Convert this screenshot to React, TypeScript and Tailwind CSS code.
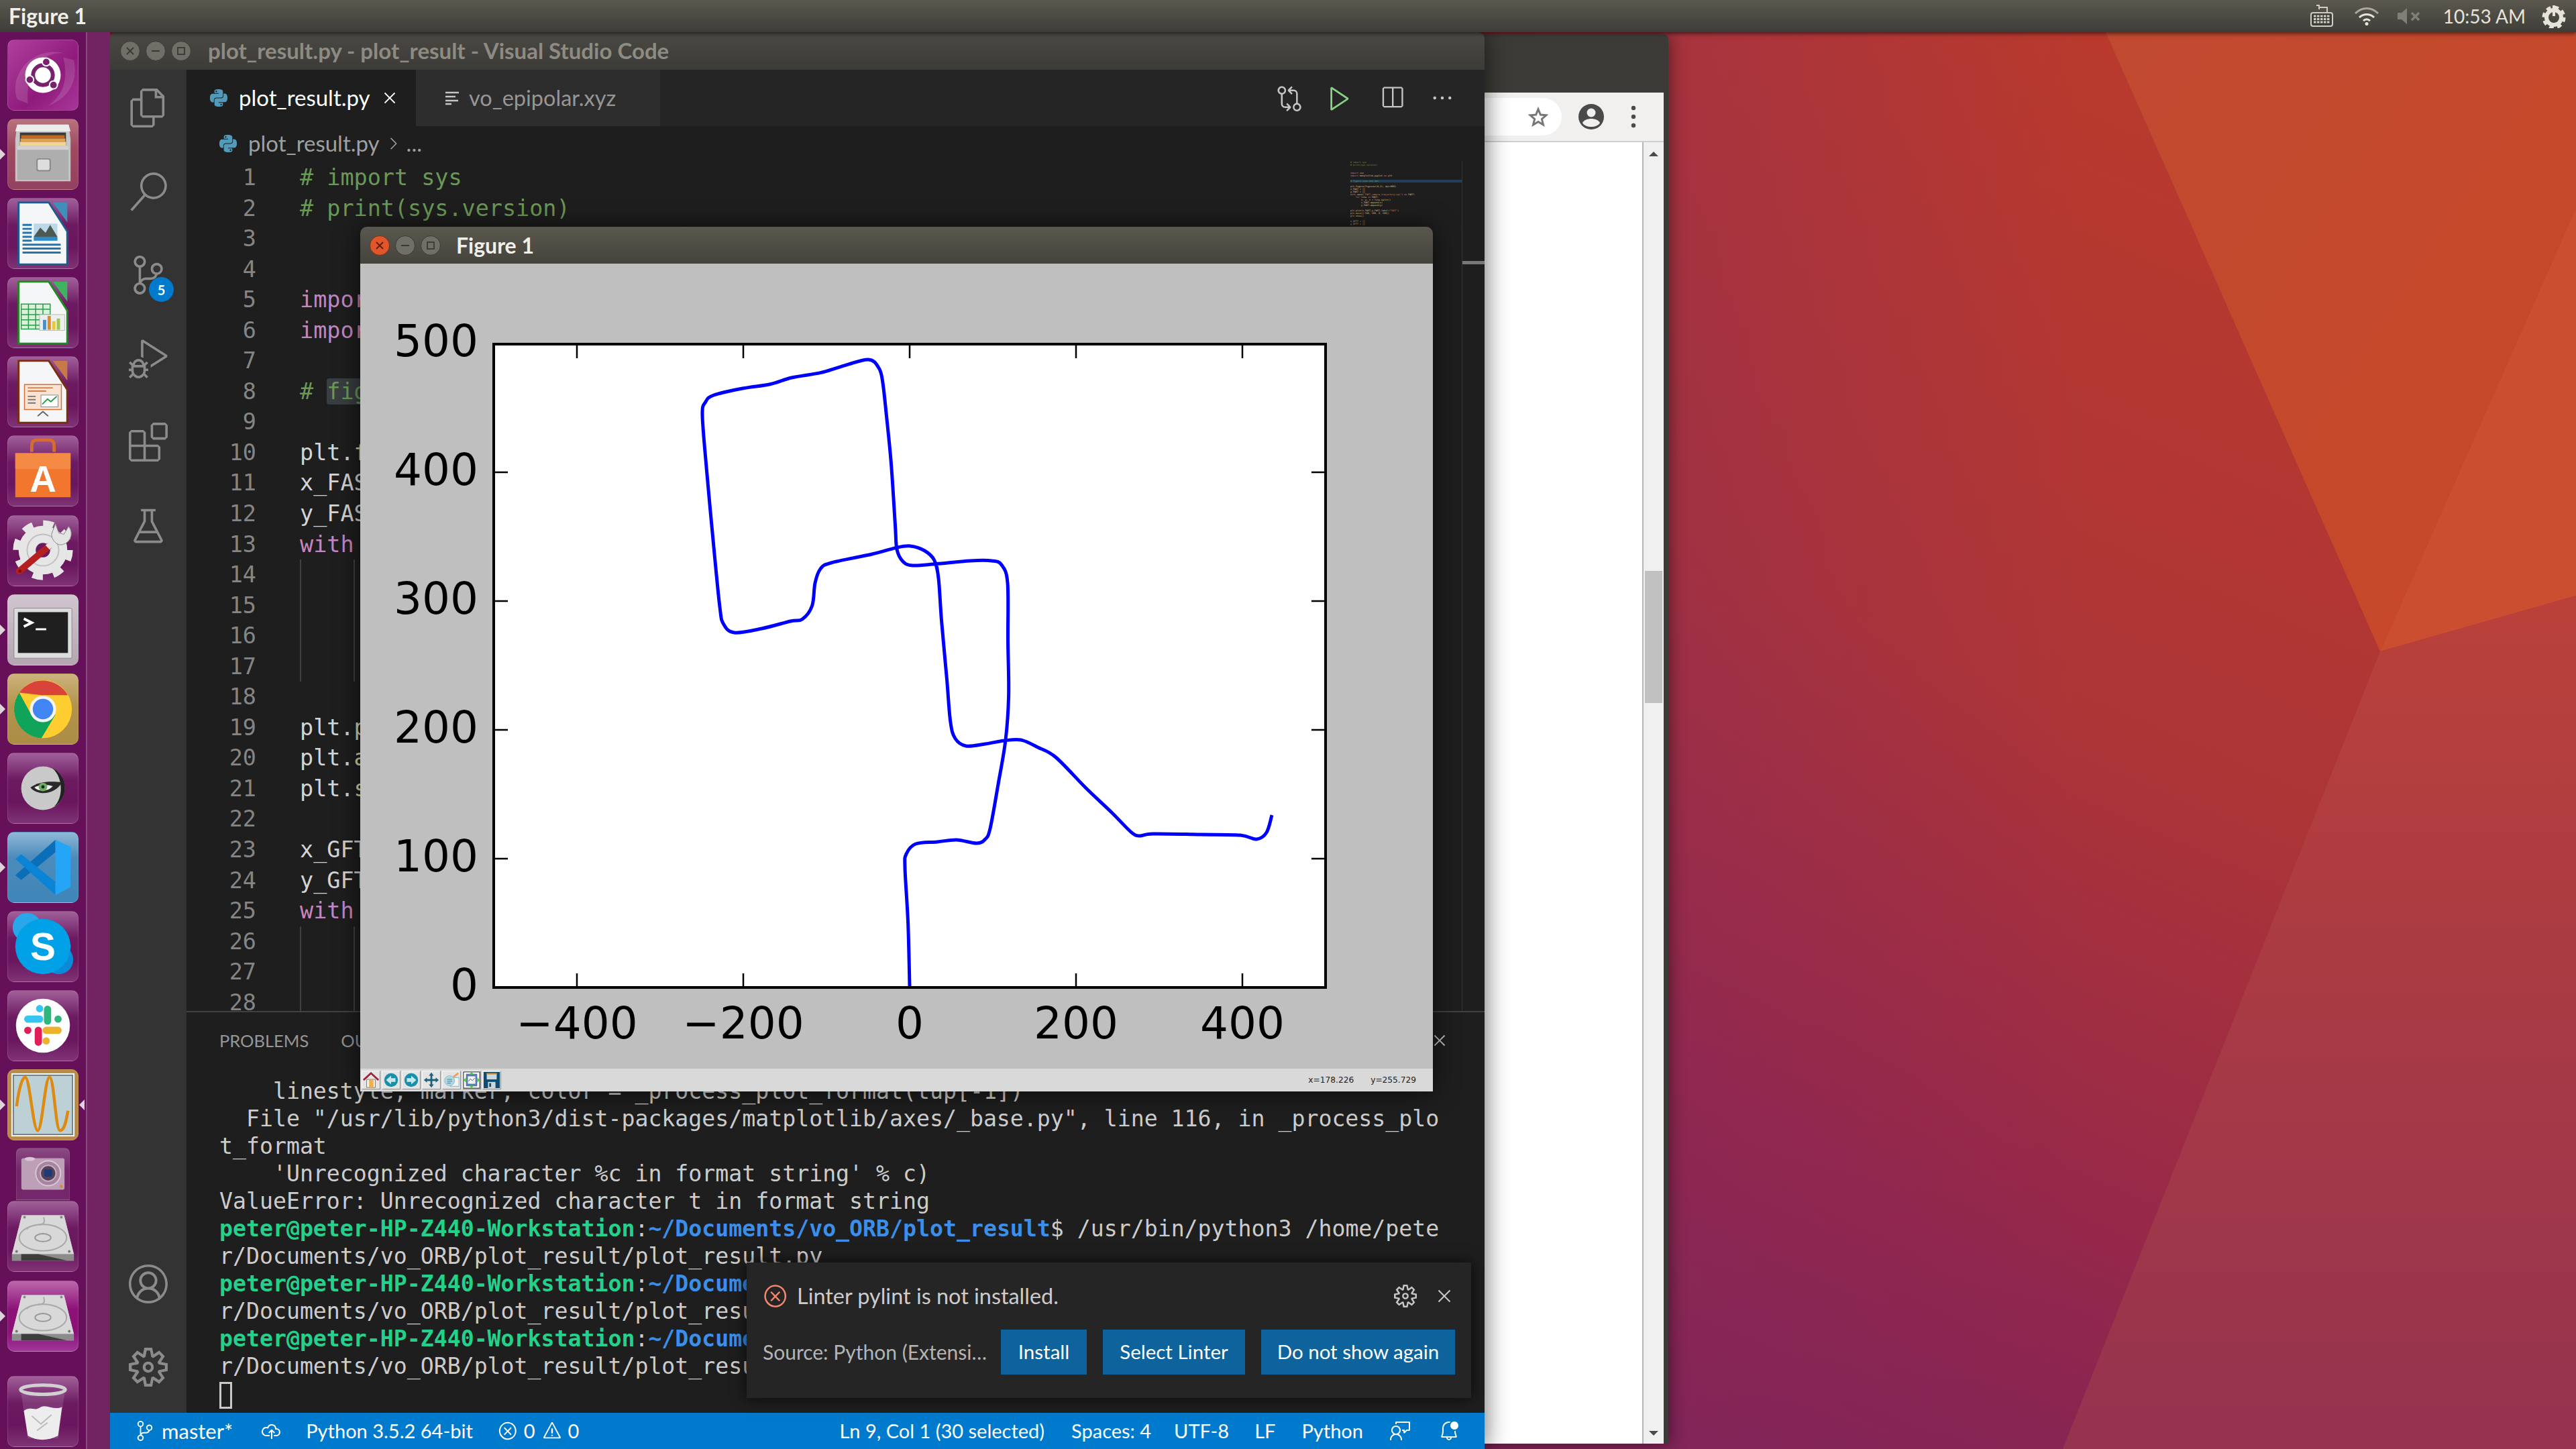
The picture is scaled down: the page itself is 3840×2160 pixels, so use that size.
import React from "react";
import { SiPython } from "react-icons/si";
import {
  VscFiles, VscSearch, VscSourceControl, VscDebugAlt, VscExtensions, VscBeaker, VscAccount, VscSettingsGear,
  VscGitCompare, VscPlay, VscSplitHorizontal, VscEllipsis, VscClose, VscCloudUpload, VscError, VscWarning,
  VscBellDot, VscFeedback, VscChevronRight,
} from "react-icons/vsc";

const curve: [number, number][] = [
  [1356,1471],[1353.6,1376],[1349,1294],[1351,1273],[1365,1258],[1397,1255],[1426,1252],[1456,1257],[1468.6,1251],[1476,1235],
  [1488,1169],[1499,1103],[1503.6,1037],[1502.5,955],[1502,869],[1493,842],[1478.4,836],[1446,836],[1395.6,840.6],[1360.6,843],
  [1346,837],[1337,819],[1334.5,783],[1328.4,690.6],[1321,615.6],[1316,571],[1310.6,549.5],[1294.5,536],[1253.4,546.6],[1223,555.6],
  [1180,563],[1148,572.7],[1107,579],[1064,589],[1051.6,599.5],[1047,619],[1053.4,701],[1064,815.6],[1073,905],[1078.4,930],
  [1094.5,943],[1135.6,937],[1178.4,926],[1196,923],[1210.6,903],[1215,869],[1223,848],[1239,839],[1300,826],[1335.6,816.6],
  [1357,814],[1378.4,821],[1392.7,835],[1399,862],[1403.5,925],[1411.4,1012],[1416.8,1076],[1424,1101],[1440,1112],[1468.6,1109],
  [1497,1104],[1522,1103],[1547,1114],[1574,1129],[1618.6,1174.5],[1658,1212],[1686.4,1240.6],[1699,1246],[1718.6,1243],[1790,1244],
  [1849,1245],[1873,1251],[1888,1241],[1896,1215],
];
function smooth(p: [number, number][]) {
  let d = `M${p[0][0]} ${p[0][1]}`;
  for (let i = 0; i < p.length - 1; i++) {
    const a = p[Math.max(i - 1, 0)], b = p[i], c = p[i + 1], e = p[Math.min(i + 2, p.length - 1)];
    d += ` C${b[0] + (c[0] - a[0]) / 6} ${b[1] + (c[1] - a[1]) / 6} ${c[0] - (e[0] - b[0]) / 6} ${c[1] - (e[1] - b[1]) / 6} ${c[0]} ${c[1]}`;
  }
  return d;
}

type Tok = [string, string?];
const G = "#6a9955", K = "#c586c0", S = "#ce9178", F = "#dcdcaa", V = "#9cdcfe";
const code: { t: Tok[]; g?: number; sel?: boolean }[] = [
  { t: [["# import sys", G]] },
  { t: [["# print(sys.version)", G]] },
  { t: [] },
  { t: [] },
  { t: [["import", K], [" csv"]] },
  { t: [["import", K], [" matplotlib.pyplot "], ["as", K], [" plt"]] },
  { t: [] },
  { t: [["# ", G], ["figure size and dpi", G]], sel: true },
  { t: [] },
  { t: [["plt."], ["figure", F], ["(figsize=(4,3), dpi=800)"]] },
  { t: [["x_FAST = []"]] },
  { t: [["y_FAST = []"]] },
  { t: [["with", K], [" "], ["open", F], ["("], ["'FAST_camera_trajectory.xyz'", S], [") "], ["as", K], [" FAST:"]] },
  { t: [["    "], ["for", K], [" line "], ["in", K], [" FAST:"]], g: 2 },
  { t: [["        x, y, z = line."], ["split", F], ["()"]], g: 2 },
  { t: [["        x_FAST."], ["append", F], ["(x)"]], g: 2 },
  { t: [["        y_FAST."], ["append", F], ["(y)"]], g: 2 },
  { t: [] },
  { t: [["plt."], ["plot", F], ["(x_FAST,y_FAST,"], ["label", V], ["="], ['"FAST"', S], [")"]] },
  { t: [["plt."], ["axis", F], ["([-500, 500, 0, 500])"]] },
  { t: [["plt."], ["show", F], ["()"]] },
  { t: [] },
  { t: [["x_GFTT = []"]] },
  { t: [["y_GFTT = []"]] },
  { t: [["with", K], [" "], ["open", F], ["("], ["'GFTT_camera_trajectory.xyz'", S], [") "], ["as", K], [" GFTT:"]] },
  { t: [["    "], ["for", K], [" line "], ["in", K], [" GFTT:"]], g: 2 },
  { t: [["        x, y, z = line."], ["split", F], ["()"]], g: 2 },
  { t: [["        x_GFTT."], ["append", F], ["(x)"]], g: 2 },
];

// the part of a line that the Figure window leaves uncovered
function visible(toks: Tok[], i: number, g?: number): Tok[] {
  if (i < 2) return toks;
  if (g) return [];
  let left = 5;
  const out: Tok[] = [];
  for (const tk of toks) {
    if (left <= 0) break;
    out.push([tk[0].slice(0, left), tk[1]]);
    left -= tk[0].length;
  }
  return out;
}

const HOST = "peter@peter-HP-Z440-Workstation";
const DIR = "~/Documents/vo_ORB/plot_result";

function Prompt({ dir, rest }: { dir: string; rest?: string }) {
  return (
    <div className="h-[41px]">
      <span className="font-bold text-[#23d18b]">{HOST}</span>
      <span>:</span>
      <span className="font-bold text-[#3b8eea]">{dir}</span>
      {rest ? <span>{rest}</span> : null}
    </div>
  );
}
const T = ({ children }: { children: string }) => <div className="h-[41px]">{children}</div>;

function Pip({ right }: { right?: boolean }) {
  return right ? (
    <div className="absolute right-[-10px] top-1/2 -translate-y-1/2 w-0 h-0 border-y-[8px] border-y-transparent border-r-[8px] border-r-[#dcd4d8]" />
  ) : (
    <div className="absolute left-[-12px] top-1/2 -translate-y-1/2 w-0 h-0 border-y-[8px] border-y-transparent border-l-[8px] border-l-[#dcd4d8]" />
  );
}

const tileBase = "relative shrink-0 w-[106px] h-[106px] rounded-[10px] border border-[#ffffff22]";
const plain = "bg-[linear-gradient(180deg,#a1609a_0%,#6c1a61_38%,#6a165e_70%,#7f3375_100%)]";

function Tile({ cls = plain, pip, pipR, children }: { cls?: string; pip?: boolean; pipR?: boolean; children: React.ReactNode }) {
  return (
    <div className={`${tileBase} ${cls}`}>
      {pip && <Pip />}
      {pipR && <Pip right />}
      <svg viewBox="0 0 106 106" className="w-full h-full">{children}</svg>
    </div>
  );
}

function DiskIcon() {
  return (
    <>
      <path d="M21 21H85L100 80V90H6V80Z" fill="#b9b8b8" />
      <path d="M21 21H85L100 80H6Z" fill="#d8d8d8" />
      <path d="M6 80H100V90H6Z" fill="#8c8c8c" />
      <path d="M20 80H46L90 90H20Z" fill="#3d3d3d" />
      <ellipse cx="53" cy="55" rx="36" ry="20" fill="none" stroke="#a8a8a8" strokeWidth="2" />
      <ellipse cx="53" cy="55" rx="12" ry="6" fill="none" stroke="#999" strokeWidth="2" />
      <path d="M28 42C40 30 60 42 54 24" fill="none" stroke="#aaa" strokeWidth="2" />
      <circle cx="13" cy="76" r="2" fill="#777" /><circle cx="93" cy="76" r="2" fill="#777" />
      <circle cx="25" cy="24" r="2" fill="#888" /><circle cx="81" cy="24" r="2" fill="#888" />
    </>
  );
}

function Launcher() {
  return (
    <div className="w-[130px] h-full shrink-0 flex flex-col items-center pt-[11px] gap-[12.1px] bg-[#66105a] border-r-2 border-[#8a4a80]">
      <Tile cls="bg-[linear-gradient(135deg,#b0409c_0%,#8f1b7c_60%,#a8369a_100%)]">
        <path d="M14 90C0 50 40 8 86 20C60 16 26 36 30 96Z" fill="#ffffff22" />
        <path d="M100 30C106 60 96 86 60 100C84 84 92 60 84 26Z" fill="#ffffff22" />
        <circle cx="53" cy="53" r="27" fill="#fff" />
        <circle cx="53" cy="53" r="15" fill="none" stroke="#77216f" strokeWidth="6" />
        <circle cx="58" cy="33" r="6" fill="#77216f" stroke="#fff" strokeWidth="2" />
        <circle cx="33" cy="60" r="6" fill="#77216f" stroke="#fff" strokeWidth="2" />
        <circle cx="69" cy="68" r="6" fill="#77216f" stroke="#fff" strokeWidth="2" />
      </Tile>
      <Tile pip cls="bg-[linear-gradient(180deg,#b8737e_0%,#a04a62_40%,#944060_100%)]">
        <path d="M14 8H92L95 30V94H11V30Z" fill="#c6c6c6" />
        <path d="M14 8H92L95 18H11Z" fill="#ececec" />
        <rect x="18" y="20" width="70" height="20" fill="#3a3a3a" />
        <rect x="20" y="24" width="66" height="5" fill="#c06a20" />
        <rect x="19" y="29" width="68" height="5" fill="#e0a050" />
        <rect x="18" y="34" width="70" height="6" fill="#f0d49a" />
        <path d="M14 40H92V92H14Z" fill="#aeaeae" />
        <path d="M14 40H92V46H14Z" fill="#d2d2d2" />
        <rect x="44" y="60" width="20" height="18" rx="3" fill="#ddd" stroke="#888" strokeWidth="2" />
      </Tile>
      <Tile>
        <path d="M16 6H62L90 50V100H16Z" fill="#f4f6f7" stroke="#1a5d8c" strokeWidth="3" />
        <path d="M68 6H90V36Z" fill="#3f8fb8" />
        <path d="M22 40H36M22 46H36M22 52H36M22 58H36M22 64H36M22 70H80M22 76H80M22 82H80" stroke="#2375ad" strokeWidth="3" />
        <rect x="39" y="38" width="36" height="26" fill="#bcd9ea" />
        <path d="M39 58L49 44L57 52L64 40L75 58Z" fill="#4d5a52" />
        <rect x="39" y="58" width="36" height="6" fill="#2b8cc9" />
      </Tile>
      <Tile>
        <path d="M16 6H62L90 50V100H16Z" fill="#f4f6f7" stroke="#1f8a1f" strokeWidth="3" />
        <path d="M68 6H90V36Z" fill="#3fb35f" />
        <rect x="20" y="40" width="44" height="38" fill="#d9f0d9" stroke="#2a9a4a" strokeWidth="1.5" />
        <path d="M20 48H64M20 56H64M20 64H64M20 72H64M31 40V78M42 40V78M53 40V78" stroke="#2a9a4a" strokeWidth="1.5" />
        <rect x="48" y="56" width="38" height="24" fill="#eee" stroke="#bbb" />
        <rect x="53" y="64" width="5" height="15" fill="#4a90c8" /><rect x="60" y="58" width="5" height="21" fill="#e08a30" /><rect x="67" y="66" width="5" height="13" fill="#e8c83a" /><rect x="74" y="62" width="5" height="17" fill="#9ac850" />
      </Tile>
      <Tile>
        <path d="M16 6H62L90 50V100H16Z" fill="#f4f6f7" stroke="#7a2e0c" strokeWidth="3" />
        <path d="M68 6H90V36Z" fill="#c8794a" />
        <rect x="25" y="42" width="56" height="38" fill="#fbe3d2" stroke="#d0703a" strokeWidth="1.5" />
        <path d="M30 47H68M30 52H58" stroke="#c9581c" strokeWidth="1.5" />
        <path d="M30 60H42M30 65H42M30 70H42" stroke="#777" strokeWidth="2" />
        <rect x="50" y="58" width="26" height="18" fill="#fff" stroke="#888" />
        <path d="M52 72L60 64L65 68L74 60" fill="none" stroke="#2a9a4a" strokeWidth="2" />
        <path d="M45 90L53 83L61 90" fill="none" stroke="#666" strokeWidth="2" />
      </Tile>
      <Tile>
        <path d="M36 24V14Q36 6 44 6H62Q70 6 70 14V24" fill="none" stroke="#d96c2c" strokeWidth="5" />
        <rect x="11" y="26" width="84" height="67" fill="#f3762e" />
        <rect x="11" y="26" width="84" height="24" fill="#f58a45" />
        <text x="53" y="85" textAnchor="middle" fontFamily="Liberation Sans" fontWeight="700" fontSize="56" fill="#fff">A</text>
      </Tile>
      <Tile>
        <circle cx="53" cy="52" r="24" fill="none" stroke="#e6e6e6" strokeWidth="26" />
        <circle cx="53" cy="52" r="41" fill="none" stroke="#e6e6e6" strokeWidth="9" strokeDasharray="16 16.2" />
        <circle cx="53" cy="52" r="24" fill="none" stroke="#c0c0c0" strokeWidth="2" />
        <path d="M17 84L62 46" stroke="#b5201e" strokeWidth="10" strokeLinecap="round" />
        <circle cx="18" cy="84" r="2.5" fill="#7a1010" />
        <path d="M60 48L74 35" stroke="#e6e6e6" strokeWidth="9" />
        <path d="M92 16A17 17 0 0 1 78 44A17 17 0 0 1 66 28L72 12L77 26L85 28Z" fill="#e4e4e4" stroke="#8a8a8a" strokeWidth="1" />
      </Tile>
      <Tile pip cls="bg-[linear-gradient(180deg,#d1c5d0_0%,#b3a5b2_100%)]">
        <rect x="9" y="20" width="88" height="76" rx="2" fill="#dcdcdc" stroke="#888" />
        <rect x="15" y="26" width="76" height="62" fill="#1f1f1f" />
        <path d="M24 36L36 42L24 48" fill="none" stroke="#fff" strokeWidth="4" />
        <path d="M42 52H58" stroke="#fff" strokeWidth="3" />
      </Tile>
      <Tile pip cls="bg-[linear-gradient(180deg,#ccb27c_0%,#b3944c_45%,#ad8d45_100%)]">
        <circle cx="53" cy="53" r="44" fill="#fecd2f" />
        <path d="M17 28A44 44 0 0 1 91 32L53 32Z" fill="#d8433a" />
        <path d="M17 28A44 44 0 0 0 51 97L72 62L36 63Z" fill="#10a35a" />
        <path d="M53 32L91 32A44 44 0 0 1 51 97L72 62Z" fill="#fecd2f" />
        <circle cx="53" cy="53" r="20" fill="#f4f4f4" />
        <circle cx="53" cy="53" r="15.5" fill="#4285f4" />
      </Tile>
      <Tile>
        <ellipse cx="53" cy="53" rx="33" ry="33" fill="#c9c9c9" />
        <path d="M68 23A33 33 0 0 1 70 81C84 68 84 38 68 23Z" fill="#222" />
        <path d="M34 52C46 42 66 42 82 44C72 62 46 66 34 52Z" fill="#2a2a2a" />
        <path d="M40 52C47 47 60 47 68 50C61 58 47 59 40 52Z" fill="#f2f2f2" />
        <circle cx="53" cy="51" r="6.5" fill="#6fae5f" />
        <circle cx="53" cy="51" r="2.5" fill="#123" />
      </Tile>
      <Tile pip cls="bg-[linear-gradient(180deg,#8fb8d6_0%,#4c8cbc_35%,#3f85b8_100%)]">
        <path d="M72 30L20 72L11 65L72 11Z" fill="#0a6fb8" />
        <path d="M11 40L20 33L72 75V95Z" fill="#0b84d6" />
        <path d="M72 11L95 22V83L72 95Z" fill="#25a5f5" />
      </Tile>
      <Tile>
        <circle cx="29" cy="24" r="22" fill="#28a8ea" />
        <circle cx="77" cy="73" r="22" fill="#0a8ad8" />
        <circle cx="53" cy="53" r="42" fill="#00a1e6" />
        <text x="53" y="73" textAnchor="middle" fontFamily="Liberation Sans" fontWeight="700" fontSize="58" fill="#fff">S</text>
      </Tile>
      <Tile>
        <ellipse cx="53" cy="53" rx="41" ry="41" fill="#fff" />
        <g strokeLinecap="round" fill="none" strokeWidth="11">
          <path d="M30 43H48" stroke="#36c5f0" /><path d="M48 27V27" stroke="#36c5f0" />
          <path d="M60 28V46" stroke="#2eb67d" /><path d="M76 43V43" stroke="#2eb67d" />
          <path d="M76 60H58" stroke="#ecb22e" /><path d="M58 76V76" stroke="#ecb22e" />
          <path d="M46 60V78" stroke="#e01e5a" /><path d="M30 60V60" stroke="#e01e5a" />
        </g>
      </Tile>
      <Tile pip pipR cls="bg-[#b98a45] !border-[#c79c58]">
        <rect x="5" y="5" width="96" height="96" fill="#fff" />
        <rect x="7" y="7" width="92" height="92" fill="#6e7f82" />
        <rect x="9" y="9" width="88" height="88" fill="#bcd0d5" />
        <path d="M13 55C17 25 22 11 26 11C33 11 38 92 45 92C52 92 56 11 63 11C70 11 72 92 79 92C85 92 88 80 91 62" fill="none" stroke="#dd8a10" strokeWidth="4.5" />
      </Tile>
      <div className="relative shrink-0 w-[80px] h-[78px] -mt-[1px] rounded-t-[8px] border border-[#ffffff18] bg-[linear-gradient(180deg,#8a4b82_0%,#74246a_45%,#76286c_100%)]">
        <svg viewBox="0 0 80 78" className="w-full h-full">
          <rect x="7" y="15" width="66" height="48" rx="3" fill="#bd9fb8" />
          <ellipse cx="20" cy="16" rx="8" ry="3" fill="#d8c8d4" />
          <circle cx="48" cy="38" r="19" fill="#a8849f" stroke="#d8c8d4" strokeWidth="2" />
          <circle cx="48" cy="38" r="12" fill="#55405a" stroke="#c8b0c4" strokeWidth="2" />
          <rect x="42" y="32" width="12" height="11" rx="2" fill="#1c3a78" />
          <rect x="66" y="56" width="4" height="4" fill="#d98a30" />
        </svg>
      </div>
      <div className="-mt-[11px]"><Tile><DiskIcon /></Tile></div>
      <Tile pip cls="bg-[linear-gradient(180deg,#bb66ab_0%,#8d1278_40%,#8d1278_75%,#a0389a_100%)]"><DiskIcon /></Tile>
      <div className="mt-[24px]">
        <Tile>
          <path d="M20 26L30 94H76L86 26Z" fill="#ffffff22" />
          <path d="M24 52C34 44 40 54 50 46C60 42 70 52 82 46L76 90C60 98 44 98 30 90Z" fill="#ededed" />
          <path d="M36 60L50 72L66 58M44 82L60 70" stroke="#bbb" strokeWidth="2" fill="none" />
          <ellipse cx="53" cy="20" rx="34" ry="7" fill="none" stroke="#d0d0d0" strokeWidth="5" />
        </Tile>
      </div>
    </div>
  );
}

function TopBar() {
  return (
    <div className="relative z-20 h-[48px] shrink-0 flex items-center pl-[13px] pr-[15px] bg-[linear-gradient(180deg,#5a584f_0%,#3e3d38_100%)] shadow-[0_2px_6px_rgba(0,0,0,0.6)]">
      <span className="text-[32px] font-bold text-[#f0efe9]">Figure 1</span>
      <div className="ml-auto flex items-center">
        <svg viewBox="0 0 36 36" className="w-[36px] h-[36px] mr-[30px]" fill="none" stroke="#cfcdc5" strokeWidth="2">
          <path d="M14 8V2H10M14 5H26V14" />
          <rect x="2" y="13" width="32" height="20" rx="3" fill="#3e3d38" />
          <path d="M6 18H30M6 22.5H30M6 27H30" strokeWidth="3" strokeDasharray="3.5 1.5" />
        </svg>
        <svg viewBox="0 0 38 28" className="w-[38px] h-[28px] mr-[26px]" fill="none" stroke="#e6e3da" strokeWidth="3">
          <path d="M2 10C12 0 26 0 36 10" opacity="0.6" />
          <path d="M8 16C14 10 24 10 30 16" />
          <path d="M14 21C17 18 21 18 24 21" />
          <circle cx="19" cy="25.5" r="2.5" fill="#e6e3da" stroke="none" />
        </svg>
        <svg viewBox="0 0 36 26" className="w-[36px] h-[26px] mr-[33px]">
          <path d="M1 8H7L15 1V25L7 18H1Z" fill="#807e76" />
          <path d="M22 8L33 19M33 8L22 19" stroke="#807e76" strokeWidth="3.5" />
        </svg>
        <span className="text-[28px] text-[#e6e3da] mr-[24px]">10:53 AM</span>
        <svg viewBox="0 0 36 36" className="w-[36px] h-[36px]" fill="none" stroke="#e6e3da">
          <circle cx="18" cy="20" r="11" strokeWidth="6" />
          <circle cx="18" cy="20" r="15" strokeWidth="5" strokeDasharray="6.5 5.3" />
          <path d="M18 2V18" strokeWidth="4" />
        </svg>
      </div>
    </div>
  );
}

function WinBtn({ kind, dim }: { kind: "x" | "-" | "o"; dim?: boolean }) {
  const isClose = kind === "x" && !dim;
  return (
    <div className={`w-[30px] h-[30px] rounded-full flex items-center justify-center border ${isClose ? "bg-[#e0562b] border-[#7d2e15]" : "bg-[#6f6e67] border-[#3a3934]"}`}>
      <svg viewBox="0 0 14 14" className="w-[14px] h-[14px]" fill="none" stroke={isClose ? "#5a1d0a" : "#3a3934"} strokeWidth="1.8">
        {kind === "x" && <path d="M2 2L12 12M12 2L2 12" />}
        {kind === "-" && <path d="M1 7H13" />}
        {kind === "o" && <rect x="2" y="2" width="10" height="10" />}
      </svg>
    </div>
  );
}

const toolBtn = "w-[28px] h-[28px] shrink-0 bg-[#e4e4e4] border border-[#f8f8f8] border-r-[#8f8f8f] border-b-[#8f8f8f]";

function FigureWindow() {
  const ticksX = [860, 1108, 1356, 1604, 1852];
  const ticksY = [1280, 1088, 896, 704];
  return (
    <div className="absolute left-[537px] top-[338px] w-[1599px] h-[1289px] flex flex-col rounded-t-[10px] overflow-hidden shadow-[0_0_36px_rgba(0,0,0,0.65)] z-30">
      <div className="h-[55px] shrink-0 flex items-center pl-[14px] gap-[8px] bg-[linear-gradient(180deg,#5a584e_0%,#44433d_100%)]">
        <WinBtn kind="x" /><WinBtn kind="-" dim /><WinBtn kind="o" dim />
        <span className="ml-[15px] text-[32px] font-bold text-[#f0efe9]">Figure 1</span>
      </div>
      <svg viewBox="537 393 1599 1200" className="w-[1599px] h-[1200px] shrink-0 bg-[#bfbfbf]">
        <rect x="736" y="513" width="1240" height="959" fill="#fff" />
        <g stroke="#000" strokeWidth="2.5">
          {ticksX.map((x) => <path key={x} d={`M${x} 513V534M${x} 1472V1451`} />)}
          {ticksY.map((y) => <path key={y} d={`M736 ${y}H757M1976 ${y}H1955`} />)}
        </g>
        <path d={smooth(curve)} fill="none" stroke="#0000ff" strokeWidth="5" strokeLinejoin="round" />
        <rect x="736" y="513" width="1240" height="959" fill="none" stroke="#000" strokeWidth="4" />
        <g fontFamily="DejaVu Sans" fontSize="66" fill="#000">
          <g textAnchor="end">
            <text x="713" y="531">500</text>
            <text x="713" y="723">400</text>
            <text x="713" y="915">300</text>
            <text x="713" y="1107">200</text>
            <text x="713" y="1299">100</text>
            <text x="713" y="1491">0</text>
          </g>
          <g textAnchor="middle">
            <text x="860" y="1548">−400</text>
            <text x="1108" y="1548">−200</text>
            <text x="1356" y="1548">0</text>
            <text x="1604" y="1548">200</text>
            <text x="1852" y="1548">400</text>
          </g>
        </g>
      </svg>
      <div className="h-[34px] shrink-0 flex items-center pl-[2px] gap-[2px] bg-[#d9d9d9]">
        <div className={toolBtn}><svg viewBox="0 0 28 28"><path d="M7 13H21V26H7Z" fill="#f2f2f2" stroke="#777" /><rect x="11" y="14" width="7" height="12" fill="#f0b050" /><path d="M2 14L14 3L26 14" fill="none" stroke="#a02030" strokeWidth="3" /></svg></div>
        <div className={toolBtn}><svg viewBox="0 0 28 28"><circle cx="14" cy="14" r="11" fill="#1a8fa8" /><path d="M6 14L14 7V11H21V17H14V21Z" fill="#c8e8f0" /></svg></div>
        <div className={toolBtn}><svg viewBox="0 0 28 28"><circle cx="14" cy="14" r="11" fill="#1a8fa8" /><path d="M22 14L14 7V11H7V17H14V21Z" fill="#c8e8f0" /></svg></div>
        <div className={toolBtn}><svg viewBox="0 0 28 28" fill="#1f607f"><path d="M14 2L18 7H15.5V12.5H21V10L26 14L21 18V15.5H15.5V21H18L14 26L10 21H12.5V15.5H7V18L2 14L7 10V12.5H12.5V7H10Z" /></svg></div>
        <div className={toolBtn}><svg viewBox="0 0 28 28"><rect x="12" y="10" width="14" height="14" fill="#f4f4f4" stroke="#6fb4c8" /><circle cx="11" cy="15" r="8" fill="#b4d8e2" stroke="#88b8c8" /><path d="M7 13H15M7 16H15M7 19H13" stroke="#2a7a98" /><path d="M17 9L25 3" stroke="#f0a050" strokeWidth="3" /></svg></div>
        <div className={toolBtn}><svg viewBox="0 0 28 28"><rect x="1" y="1" width="26" height="26" fill="#fff" stroke="#111" /><rect x="5" y="4" width="18" height="20" fill="#5a78b8" /><rect x="8" y="8" width="12" height="12" fill="#f4f4f4" /><path d="M9 16L12 12L15 15L19 11" fill="none" stroke="#555" /><path d="M14 1L18 5H10ZM14 27L18 23H10ZM1 14L5 10V18ZM27 14L23 10V18Z" fill="#44d030" /></svg></div>
        <div className={toolBtn}><svg viewBox="0 0 28 28"><rect x="1" y="1" width="26" height="26" fill="#0f4a6f" /><rect x="6" y="3" width="16" height="10" fill="#c8d8e0" /><rect x="6" y="3" width="16" height="2" fill="#d98a30" /><rect x="8" y="17" width="12" height="10" fill="#c8d8e0" /><rect x="10" y="19" width="3" height="6" fill="#0f4a6f" /></svg></div>
        <div className="ml-auto flex gap-[25px] pr-[25px] font-['DejaVu_Sans',sans-serif] text-[12.2px] text-[#222]">
          <span>x=178.226</span><span>y=255.729</span>
        </div>
      </div>
    </div>
  );
}

function ChromeWindow() {
  return (
    <div className="absolute left-[2100px] top-[52px] w-[387px] h-[2100px] flex flex-col rounded-t-[6px] bg-[#3c3b37] pr-[7px] shadow-[0_0_26px_rgba(0,0,0,0.55)]">
      <div className="h-[86px] shrink-0" />
      <div className="h-[74px] shrink-0 flex items-center bg-[#f1f0ef] border-b-[2px] border-[#cfcfcf]">
        <div className="w-[228px] h-[56px] shrink-0 flex items-center justify-end bg-white rounded-r-[28px] pr-[20px]">
          <svg viewBox="0 0 24 24" className="w-[30px] h-[30px]" fill="none" stroke="#777" strokeWidth="2.4"><path d="M12 3L14.7 9.6L21.5 10.2L16.3 14.8L18 21.6L12 18L6 21.6L7.7 14.8L2.5 10.2L9.3 9.6Z" /></svg>
        </div>
        <svg viewBox="0 0 38 38" className="ml-[25px] w-[38px] h-[38px]"><circle cx="19" cy="19" r="19" fill="#4a4a4a" /><circle cx="19" cy="13" r="6.5" fill="#f1f0ef" /><path d="M6 28C10 20 28 20 32 28C28 36 10 36 6 28Z" fill="#f1f0ef" /></svg>
        <svg viewBox="0 0 8 36" className="ml-[40px] w-[8px] h-[36px]" fill="#4a4a4a"><circle cx="4" cy="5" r="3.2" /><circle cx="4" cy="18" r="3.2" /><circle cx="4" cy="31" r="3.2" /></svg>
      </div>
      <div className="flex-1 flex min-h-0">
        <div className="flex-1 bg-white" />
        <div className="w-[32px] shrink-0 flex flex-col items-center bg-[#f0f0f0] border-l-[2px] border-[#b5b5b5]">
          <div className="mt-[14px] w-0 h-0 border-x-[7px] border-x-transparent border-b-[7px] border-b-[#4a4a4a]" />
          <div className="mt-[618px] w-[26px] h-[197px] bg-[#c1c1c1]" />
          <div className="mt-auto mb-[12px] w-0 h-0 border-x-[7px] border-x-transparent border-t-[7px] border-t-[#4a4a4a]" />
        </div>
      </div>
    </div>
  );
}

function FileLines({ className }: { className?: string }) {
  return (
    <svg viewBox="0 0 22 22" className={className} fill="none" stroke="#c5c5c5" strokeWidth="2.5">
      <path d="M1 3H21M1 9H16M1 15H20M1 20H10" />
    </svg>
  );
}

function Editor() {
  return (
    <div className="relative flex-1 min-h-0 overflow-hidden bg-[#1e1e1e] font-['DejaVu_Sans_Mono',monospace] text-[33.45px] text-[#d4d4d4] pt-[2px] whitespace-pre">
      {code.map((l, i) => (
        <div key={i} className="relative h-[45.55px] leading-[45.55px] flex">
          <div className="w-[104px] shrink-0 text-right text-[#858585]">{i + 1}</div>
          <div className="pl-[65px]">
            {l.g ? <span className="absolute left-[169px] top-0 h-full w-[2px] bg-[#404040]" /> : null}
            {l.g === 2 ? <span className="absolute left-[249px] top-0 h-full w-[2px] bg-[#404040]" /> : null}
            {visible(l.t, i, l.g).map((tk, j) =>
              l.sel && j === 1 ? (
                <span key={j} className="bg-[#3a3d41] rounded-[4px]" style={{ color: tk[1] }}>{tk[0]}</span>
              ) : (
                <span key={j} style={{ color: tk[1] }}>{tk[0]}</span>
              )
            )}
          </div>
        </div>
      ))}
      <div className="absolute left-[1735px] top-0 font-['DejaVu_Sans_Mono',monospace] text-[3.33px]">
        {code.slice(0, 24).map((l, i) => (
          <div key={i} className={`relative h-[4px] leading-[4px] w-[166px] ${l.sel ? "bg-[#22405c]" : ""}`}>
            {l.t.map((tk, j) => <span key={j} style={{ color: tk[1] }}>{tk[0]}</span>)}
          </div>
        ))}
      </div>
      <div className="absolute right-0 top-0 bottom-0 w-[34px] border-l border-[#333]">
        <div className="mt-[149px] h-[5px] bg-[#777]" />
      </div>
    </div>
  );
}

function Terminal() {
  return (
    <div className="h-[599px] shrink-0 bg-[#1e1e1e] border-t-2 border-[#414141] relative overflow-hidden">
      <div className="h-[84px] flex items-center pl-[49px] pr-[52px] gap-[48px] text-[25.5px] text-[#969696]">
        <span>PROBLEMS</span><span>OU</span>
        <VscClose className="ml-auto text-[#c5c5c5]" size={30} />
      </div>
      <div className="mt-[13px] pl-[49px] font-['DejaVu_Sans_Mono',monospace] text-[33.2px] leading-[41px] text-[#cccccc] whitespace-pre">
        <T>{"    linestyle, marker, color = _process_plot_format(tup[-1])"}</T>
        <T>{'  File "/usr/lib/python3/dist-packages/matplotlib/axes/_base.py", line 116, in _process_plo'}</T>
        <T>t_format</T>
        <T>{"    'Unrecognized character %c in format string' % c)"}</T>
        <T>ValueError: Unrecognized character t in format string</T>
        <Prompt dir={DIR} rest="$ /usr/bin/python3 /home/pete" />
        <T>r/Documents/vo_ORB/plot_result/plot_result.py</T>
        <Prompt dir="~/Docume" />
        <T>r/Documents/vo_ORB/plot_result/plot_resu</T>
        <Prompt dir="~/Docume" />
        <T>r/Documents/vo_ORB/plot_result/plot_resu</T>
        <div className="w-[19px] h-[40px] mt-[3px] border-[3px] border-[#c8c8c8]" />
      </div>
    </div>
  );
}

function Notification() {
  return (
    <div className="absolute left-[949px] top-[1834px] w-[1080px] h-[202px] z-20 flex flex-col bg-[#252526] px-[24px] shadow-[0_0_20px_rgba(0,0,0,0.7)]">
      <div className="h-[100px] shrink-0 flex items-center text-[32.4px] text-[#cccccc]">
        <VscError size={38} className="text-[#f48771] shrink-0" />
        <span className="ml-[13px]">Linter pylint is not installed.</span>
        <VscSettingsGear size={34} className="ml-auto mr-[24px] text-[#c5c5c5]" />
        <VscClose size={34} className="text-[#c5c5c5] mr-[-1px]" />
      </div>
      <div className="h-[67px] flex items-center text-[29.5px]">
        <span className="w-[336px] shrink-0 truncate text-[30px] text-[#b4b4b4]">Source: Python (Extensi…</span>
        <div className="ml-[19px] w-[128px] h-full flex items-center justify-center bg-[#0e639c] text-white">Install</div>
        <div className="ml-[24px] w-[212px] h-full flex items-center justify-center bg-[#0e639c] text-white">Select Linter</div>
        <div className="ml-[24px] w-[289px] h-full flex items-center justify-center bg-[#0e639c] text-white">Do not show again</div>
      </div>
    </div>
  );
}

function StatusBar() {
  return (
    <div className="h-[54px] shrink-0 flex items-center bg-[#007acc] text-white text-[29px] pl-[37px]">
      <VscSourceControl size={30} />
      <span className="ml-[10px] text-[31px]">master*</span>
      <VscCloudUpload size={32} className="ml-[41px]" />
      <span className="ml-[36px]">Python 3.5.2 64-bit</span>
      <VscError size={30} className="ml-[37px]" />
      <span className="ml-[9px]">0</span>
      <VscWarning size={30} className="ml-[10px]" />
      <span className="ml-[9px]">0</span>
      <span className="ml-auto">Ln 9, Col 1 (30 selected)</span>
      <span className="ml-[40px]">Spaces: 4</span>
      <span className="ml-[34px]">UTF-8</span>
      <span className="ml-[38px]">LF</span>
      <span className="ml-[39px]">Python</span>
      <VscFeedback size={32} className="ml-[40px]" />
      <VscBellDot size={32} className="ml-[40px] mr-[37px]" />
    </div>
  );
}

const actCls = "relative h-[114px] flex items-center justify-center text-[#8b8b8b]";

function VSCodeWindow() {
  return (
    <div className="absolute left-[164px] top-[48px] w-[2049px] h-[2112px] flex flex-col rounded-t-[10px] overflow-hidden shadow-[0_0_36px_rgba(0,0,0,0.6)] z-10">
      <div className="h-[56px] shrink-0 flex items-center pl-[15px] gap-[8px] bg-[linear-gradient(180deg,#4a4944_0%,#3c3b37_100%)]">
        <WinBtn kind="x" dim /><WinBtn kind="-" dim /><WinBtn kind="o" dim />
        <span className="ml-[17px] text-[33px] font-bold text-[#8d8b82]">plot_result.py - plot_result - Visual Studio Code</span>
      </div>
      <div className="flex-1 min-h-0 flex">
        <div className="w-[114px] shrink-0 bg-[#333333] flex flex-col gap-[10.5px]">
          <div className={actCls}><VscFiles size={58} /></div>
          <div className={actCls}><VscSearch size={58} /></div>
          <div className={actCls}>
            <VscSourceControl size={58} />
            <div className="absolute left-[58px] top-[60px] w-[37px] h-[37px] rounded-full bg-[#007acc] flex items-center justify-center text-[20px] font-bold text-white">5</div>
          </div>
          <div className={actCls}><VscDebugAlt size={58} /></div>
          <div className={actCls}><VscExtensions size={58} /></div>
          <div className={actCls}><VscBeaker size={58} /></div>
          <div className="mt-auto flex flex-col gap-[10.5px] pb-[11px]">
            <div className={actCls}><VscAccount size={58} /></div>
            <div className={actCls}><VscSettingsGear size={58} /></div>
          </div>
        </div>
        <div className="flex-1 min-w-0 flex flex-col bg-[#1e1e1e]">
          <div className="h-[84px] shrink-0 flex bg-[#252526]">
            <div className="w-[342px] h-full flex items-center pl-[35px] bg-[#1e1e1e] text-[33px] text-white">
              <SiPython size={26} className="text-[#519aba]" />
              <span className="ml-[17px]">plot_result.py</span>
              <VscClose size={30} className="ml-[14px]" />
            </div>
            <div className="w-[364px] h-full flex items-center pl-[43px] bg-[#2d2d2d] text-[32.5px] text-[#969696]">
              <FileLines className="w-[22px] h-[22px]" />
              <span className="ml-[14px]">vo_epipolar.xyz</span>
            </div>
            <div className="ml-auto flex items-center text-[#c5c5c5]">
              <VscGitCompare size={40} className="mr-[33px]" />
              <VscPlay size={44} className="mr-[37px] text-[#89d185]" />
              <VscSplitHorizontal size={38} className="mr-[38px]" />
              <VscEllipsis size={36} className="mr-[45px]" />
            </div>
          </div>
          <div className="h-[52px] shrink-0 flex items-center pl-[49px] text-[33px] text-[#a0a0a0]">
            <SiPython size={26} className="text-[#519aba]" />
            <span className="ml-[17px]">plot_result.py</span>
            <VscChevronRight size={28} className="ml-[6px]" />
            <span className="ml-[6px]">...</span>
          </div>
          <Editor />
          <Terminal />
        </div>
      </div>
      <StatusBar />
      <Notification />
    </div>
  );
}

export default function App() {
  return (
    <div className="relative w-[3840px] h-[2160px] overflow-hidden flex flex-col font-[Lato,'Noto_Sans',sans-serif]">
      <svg viewBox="0 0 3840 2160" className="absolute inset-0 w-full h-full">
        <defs>
          <linearGradient id="wa" gradientUnits="userSpaceOnUse" x1="3400" y1="100" x2="2500" y2="2160">
            <stop offset="0" stopColor="#ba3a2c" /><stop offset="0.45" stopColor="#ad3537" /><stop offset="0.75" stopColor="#96284a" /><stop offset="1" stopColor="#7e2258" />
          </linearGradient>
          <linearGradient id="wl" gradientUnits="userSpaceOnUse" x1="2480" y1="0" x2="3100" y2="0">
            <stop offset="0" stopColor="#8a2a5a" stopOpacity="0.35" /><stop offset="1" stopColor="#8a2a5a" stopOpacity="0" />
          </linearGradient>
          <linearGradient id="wb" gradientUnits="userSpaceOnUse" x1="3140" y1="48" x2="3840" y2="500">
            <stop offset="0" stopColor="#c04a30" /><stop offset="1" stopColor="#c7482a" />
          </linearGradient>
          <linearGradient id="wd" gradientUnits="userSpaceOnUse" x1="3400" y1="900" x2="3400" y2="2160">
            <stop offset="0" stopColor="#ba413a" /><stop offset="1" stopColor="#953350" />
          </linearGradient>
        </defs>
        <rect width="3840" height="2160" fill="url(#wa)" />
        <rect width="3840" height="2160" fill="url(#wl)" />
        <polygon points="3139,48 3840,48 3840,310 3548,971" fill="url(#wb)" />
        <polygon points="3548,971 3840,310 3840,888" fill="#cb4e30" />
        <polygon points="3548,971 3840,888 3840,2160 3075,2160" fill="url(#wd)" />
      </svg>
      <TopBar />
      <ChromeWindow />
      <VSCodeWindow />
      <FigureWindow />
      <div className="relative z-20 flex-1 min-h-0 flex">
        <Launcher />
        <div className="w-[34px] h-full bg-[#71245f]" />
      </div>
    </div>
  );
}
